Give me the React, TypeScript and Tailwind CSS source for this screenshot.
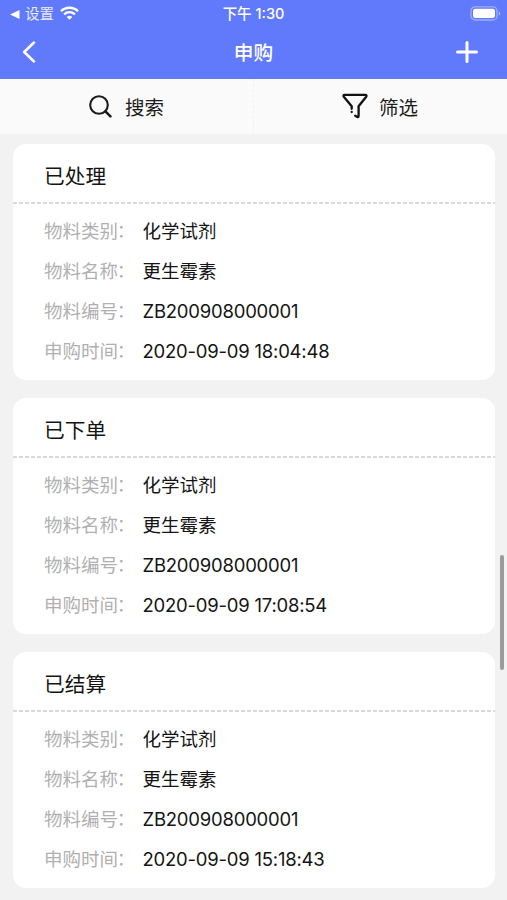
interface Purchase {
  status: string
  category: string
  name: string
  code: string
  time: string
}

const purchases: Purchase[] = [
  { status: '已处理', category: '化学试剂', name: '更生霉素', code: 'ZB200908000001', time: '2020-09-09 18:04:48' },
  { status: '已下单', category: '化学试剂', name: '更生霉素', code: 'ZB200908000001', time: '2020-09-09 17:08:54' },
  { status: '已结算', category: '化学试剂', name: '更生霉素', code: 'ZB200908000001', time: '2020-09-09 15:18:43' },
]

function StatusBar() {
  return (
    <div className="grid h-7 grid-cols-3 items-center">
      <div className="flex items-center pl-[10px]">
        <svg width="10" height="9" viewBox="0 0 10 9" fill="currentColor">
          <path d="M0 4.5 9.5 0v9z" />
        </svg>
        <span className="ml-[5px] text-[14.5px] leading-7 text-white/85">设置</span>
        <svg className="-mt-[2px] ml-[6px]" width="19" height="14" viewBox="0 0 19 14" fill="none" stroke="currentColor" strokeWidth="2.3">
          <path d="M1 5.2a12.2 12.2 0 0 1 17 0" />
          <path d="M4.1 8.3a7.8 7.8 0 0 1 10.8 0" />
          <path d="M9.5 13.8 6.7 11a4 4 0 0 1 5.6 0z" fill="currentColor" stroke="none" />
        </svg>
      </div>
      <div className="text-center text-[14.5px] leading-7 font-medium whitespace-nowrap">下午 1:30</div>
      <div className="-mt-[2px] flex justify-end pr-[6px]">
        <svg width="31" height="15" viewBox="0 0 31 15">
          <rect x="1" y=".8" width="26" height="13.2" rx="4" fill="none" stroke="#fff" strokeOpacity=".4" strokeWidth="1.3" />
          <rect x="3" y="2.8" width="22" height="9.2" rx="2.2" fill="#fff" />
          <path d="M28.8 5.2c2 .8 2 3.6 0 4.4z" fill="#fff" fillOpacity=".5" />
        </svg>
      </div>
    </div>
  )
}

function NavBar() {
  return (
    <div className="grid h-[47px] grid-cols-3 items-center">
      <svg className="ml-[22px]" width="14" height="22" viewBox="0 0 14 22" fill="none" stroke="currentColor" strokeWidth="2.5" strokeLinecap="round" strokeLinejoin="round">
        <path d="M12 1.5 2.2 11 12 20.5" />
      </svg>
      <h1 className="pt-[3px] text-center text-[19.7px] leading-7 font-medium">申购</h1>
      <svg className="mr-[28px] justify-self-end" width="24" height="24" viewBox="0 0 24 24" fill="none" stroke="currentColor" strokeWidth="3" strokeLinecap="round">
        <path d="M12 2.5v19M2.5 12h19" />
      </svg>
    </div>
  )
}

function Field({ label, value, numeric }: { label: string; value: string; numeric?: boolean }) {
  return (
    <div className="flex h-[40.3px] items-center text-[18.5px] leading-6">
      <span className="flex w-[98.5px] whitespace-nowrap text-[#b0b0b0]">
        <span>{label}</span>
        <span className="-ml-px text-[17px]">：</span>
      </span>
      <span className={numeric ? 'tracking-[-0.22px] whitespace-nowrap text-[#141414]' : 'whitespace-nowrap text-[#141414]'}>
        {value}
      </span>
    </div>
  )
}

function PurchaseCard({ item }: { item: Purchase }) {
  return (
    <div className="h-[236px] shrink-0 rounded-[13px] bg-white">
      <div className="flex h-[58px] items-center pt-[7px] pl-[31px]">
        <h2 className="text-[20.7px] leading-7 text-[#141414]">{item.status}</h2>
      </div>
      <svg className="block h-[2px] w-full">
        <line x1="0" y1="1" x2="100%" y2="1" stroke="#cdcdcd" strokeWidth="1.5" strokeDasharray="4 2" />
      </svg>
      <div className="pt-[6.4px] pl-[31px]">
        <Field label="物料类别" value={item.category} />
        <Field label="物料名称" value={item.name} />
        <Field label="物料编号" value={item.code} numeric />
        <Field label="申购时间" value={item.time} numeric />
      </div>
    </div>
  )
}

export default function App() {
  return (
    <div className="relative flex h-[900px] w-[507px] flex-col overflow-hidden bg-[#f2f2f2] font-['Inter','Noto_Sans_CJK_SC',sans-serif]">
      <header className="h-[79px] shrink-0 bg-[#6179fb] text-white">
        <StatusBar />
        <NavBar />
      </header>

      <div className="flex h-[55px] shrink-0 bg-[#fafafa] text-[19.5px] leading-7 text-[#1c1c1c]">
        <button className="flex w-[254px] items-center border-r border-dashed border-[#f1f1f1] pl-[89px]">
          <svg width="23" height="23" viewBox="0 0 23 23" fill="none" stroke="currentColor" strokeWidth="2.1" strokeLinecap="round">
            <circle cx="10" cy="10" r="8.8" />
            <path d="m16.4 16.4 5 5" strokeWidth="2.6" />
          </svg>
          <span className="mt-[2px] ml-[13px]">搜索</span>
        </button>
        <button className="flex flex-1 items-center pl-[88px]">
          <svg className="-mt-[2px]" width="26" height="26" viewBox="0 0 26 26" fill="none" stroke="#111" strokeWidth="2.3" strokeLinecap="round" strokeLinejoin="round">
            <path d="M9.7 15.8v-2.6L2 4C1.1 2.8 1.4 1.8 2.6 1.8h20.8c1.2 0 1.5 1 .6 2.2l-7.4 9.2v9.6c0 1.4-.7 1.6-1.6 1l-1.8-1.1" />
            <path d="M9.7 18.8v.2" />
          </svg>
          <span className="mt-[2px] ml-[11px]">筛选</span>
        </button>
      </div>

      <main className="flex flex-1 flex-col gap-[18px] overflow-hidden pt-[10px] pr-3 pl-[13px]">
        {purchases.map((item) => (
          <PurchaseCard key={item.time} item={item} />
        ))}
      </main>

      {/* scroll indicator */}
      <div className="absolute top-[555px] right-[3px] h-[115px] w-1 rounded-full bg-[#9b9b9b]" />
    </div>
  )
}
